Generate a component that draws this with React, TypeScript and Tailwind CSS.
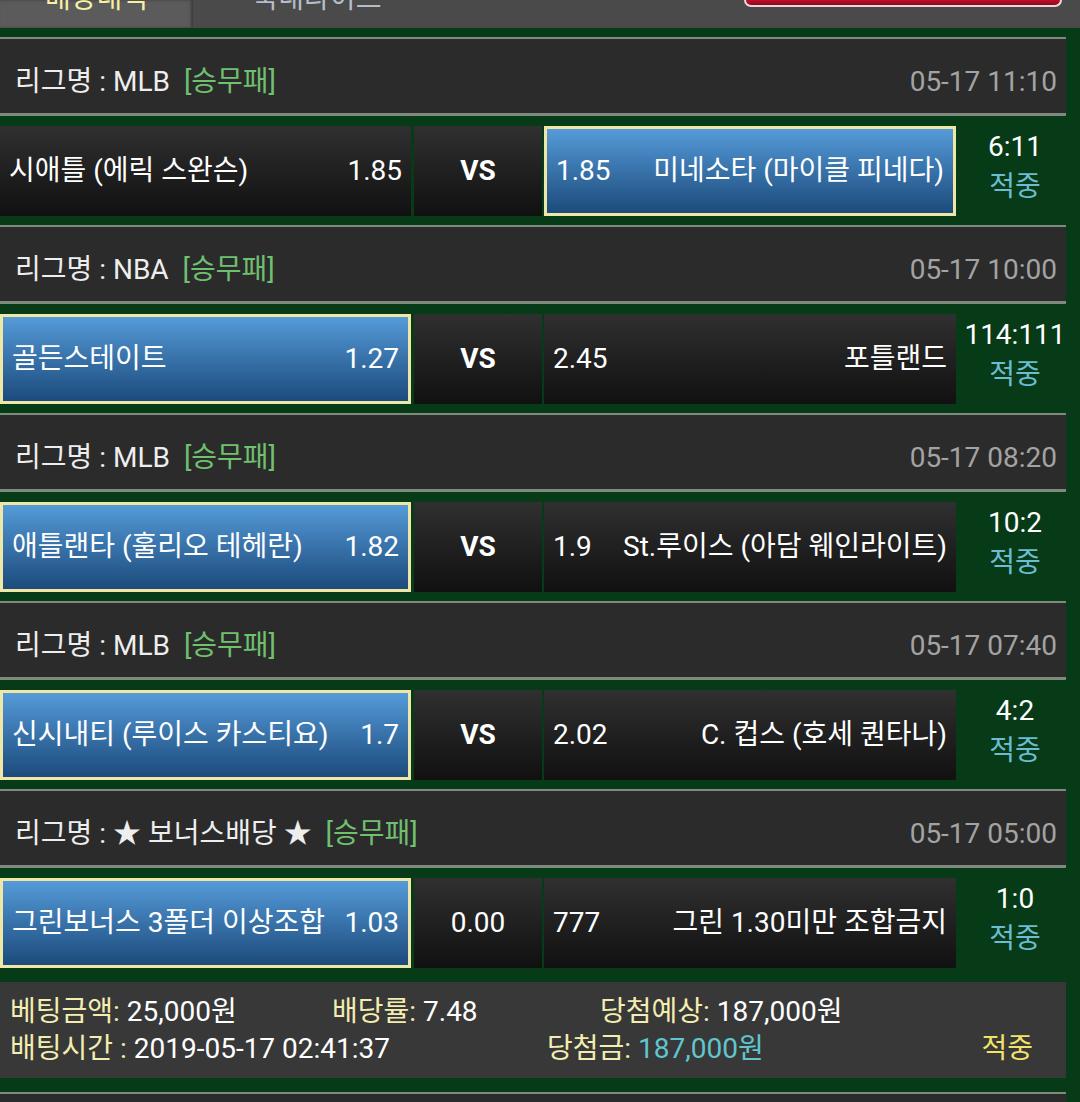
const font = "font-['Roboto','Noto_Sans_CJK_KR',sans-serif]";

type Match = {
  league: string;
  date: string;
  home: string;
  homeOdd: string;
  mid: string;
  awayOdd: string;
  away: string;
  pick: 'home' | 'away';
  score: string;
};

const matches: Match[] = [
  { league: 'MLB', date: '05-17 11:10', home: '시애틀 (에릭 스완슨)', homeOdd: '1.85', mid: 'VS', awayOdd: '1.85', away: '미네소타 (마이클 피네다)', pick: 'away', score: '6:11' },
  { league: 'NBA', date: '05-17 10:00', home: '골든스테이트', homeOdd: '1.27', mid: 'VS', awayOdd: '2.45', away: '포틀랜드', pick: 'home', score: '114:111' },
  { league: 'MLB', date: '05-17 08:20', home: '애틀랜타 (훌리오 테헤란)', homeOdd: '1.82', mid: 'VS', awayOdd: '1.9', away: 'St.루이스 (아담 웨인라이트)', pick: 'home', score: '10:2' },
  { league: 'MLB', date: '05-17 07:40', home: '신시내티 (루이스 카스티요)', homeOdd: '1.7', mid: 'VS', awayOdd: '2.02', away: 'C. 컵스 (호세 퀀타나)', pick: 'home', score: '4:2' },
  { league: '★ 보너스배당 ★', date: '05-17 05:00', home: '그린보너스 3폴더 이상조합', homeOdd: '1.03', mid: '0.00', awayOdd: '777', away: '그린 1.30미만 조합금지', pick: 'home', score: '1:0' },
];

const boxBase = 'flex items-center justify-between h-[90px] text-[28px] text-white whitespace-nowrap';
const darkBox = 'bg-gradient-to-b from-[#303030] to-[#111111] px-[9px]';
const pickedBox = 'bg-gradient-to-b from-[#559bd9] to-[#1c4b7c] border-[3px] border-[#efe7a6] px-[9px]';

const MatchGroup = ({ m }: { m: Match }) => (
  <div>
    <div className="mr-[14px] border-t-2 border-b-[3px] border-[#7e8a7e] bg-[#2b2b2b] h-[79px] flex items-center justify-between pl-[15px] pr-[9px] pt-[12px] text-[28px]">
      <div className="text-[#eeeeee]">
        리그명 : {m.league} <span className="ml-[7px] text-[#6fc06f]">[승무패]</span>
      </div>
      <div className="text-[#a3a3a3]">{m.date}</div>
    </div>
    <div className="flex mt-[10px] mb-[9px]">
      <div className={`w-[411px] ${boxBase} ${m.pick === 'home' ? pickedBox : darkBox}`}>
        <span>{m.home}</span>
        <span>{m.homeOdd}</span>
      </div>
      <div className={`ml-[3px] w-[128px] ${boxBase} ${darkBox} justify-center ${m.mid === 'VS' ? 'font-bold' : ''}`}>
        {m.mid}
      </div>
      <div className={`ml-[2px] w-[412px] ${boxBase} ${m.pick === 'away' ? pickedBox : darkBox}`}>
        <span>{m.awayOdd}</span>
        <span>{m.away}</span>
      </div>
      <div className="flex-1 pr-[6px] flex flex-col items-center text-[28px] leading-[41px] whitespace-nowrap">
        <span className="text-white">{m.score}</span>
        <span className="text-[#6cbcd2] -mt-[1px]">적중</span>
      </div>
    </div>
  </div>
);

export default function App() {
  return (
    <div className={`${font} w-[1080px] h-[1102px] overflow-hidden bg-[#073a16]`}>
      <div className="h-[28px] bg-[#4a4a4a] flex overflow-hidden">
        <div className="w-[193px] bg-[#5b5b5b] shadow-[inset_-2px_0_3px_rgba(0,0,0,0.35)] flex justify-center">
          <span className="-mt-[15px] leading-[28px] text-[28px] text-[#f6f1a6]">배당내역</span>
        </div>
        <div className="w-[248px] flex justify-center">
          <span className="-mt-[15px] leading-[28px] text-[28px] text-[#b6bdca]">국내라이브</span>
        </div>
        <div className="ml-auto mr-[18px] w-[318px] h-[7px] rounded-b-[8px] border-2 border-t-0 border-[#efd6dc] bg-gradient-to-b from-[#c0102c] to-[#8c0a1e]" />
      </div>
      <div className="pt-[9px]">
        {matches.map((m, i) => (
          <MatchGroup key={i} m={m} />
        ))}
        <div className="mt-[14px] mr-[14px] h-[96px] bg-[#383838] pt-[11px] pl-[10px] pr-[33px] text-[28px] leading-[37px] whitespace-nowrap">
          <div className="flex">
            <div className="w-[322px]">
              <span className="text-[#f3eeb0]">베팅금액:</span> <span className="text-white">25,000원</span>
            </div>
            <div className="w-[268px]">
              <span className="text-[#f3eeb0]">배당률:</span> <span className="text-white">7.48</span>
            </div>
            <div>
              <span className="text-[#f3eeb0]">당첨예상:</span> <span className="text-white">187,000원</span>
            </div>
          </div>
          <div className="flex">
            <div className="w-[537px]">
              <span className="text-[#f3eeb0]">배팅시간 :</span> <span className="text-white">2019-05-17 02:41:37</span>
            </div>
            <div className="flex-1">
              <span className="text-[#f3eeb0]">당첨금:</span> <span className="text-[#5fc6cf]">187,000원</span>
            </div>
            <div className="text-[#f2e36a]">적중</div>
          </div>
        </div>
        <div className="mt-[14px] mr-[14px] border-t-2 border-[#7e8a7e] bg-[#2b2b2b] h-[20px]" />
      </div>
    </div>
  );
}
